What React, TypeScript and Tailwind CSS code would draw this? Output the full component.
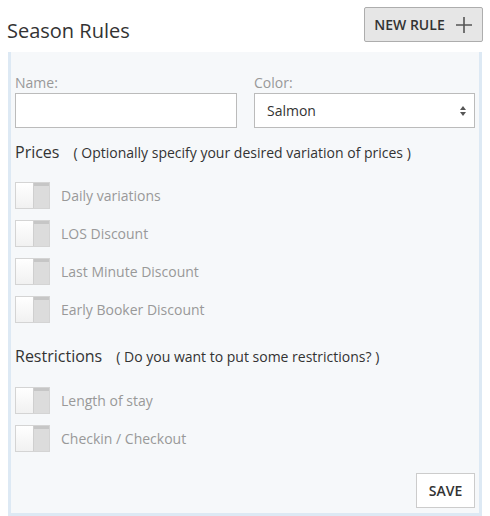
import React from "react";

function Toggle() {
  return (
    <div className="flex h-[27px] w-[35px] border border-[#d4d4d4] bg-white">
      <div className="h-full w-[18px] bg-gradient-to-b from-white to-[#f1f1f1] border-r border-[#cfcfcf]" />
      <div className="h-full flex-1 bg-[#dcdcdc] border-t-[3px] border-[#c6c6c6]" />
    </div>
  );
}

function Row({ label }: { label: string }) {
  return (
    <div className="flex items-center h-[27px]">
      <Toggle />
      <span className="ml-[11px] text-[14px] text-[#999]">{label}</span>
    </div>
  );
}

export default function App() {
  return (
    <div
      className="w-[490px] h-[516px] bg-white overflow-hidden flex flex-col"
      style={{ fontFamily: '"Open Sans", sans-serif' }}
    >
      <div className="flex justify-between items-start h-[52px]">
        <div className="pl-[7px] pt-[16px] text-[20px] leading-[30px] text-[#333]">Season Rules</div>
        <button className="mt-[7px] mr-[7px] h-[35px] w-[119px] flex items-center justify-center gap-[8px] rounded-[2px] border border-[#adadad] bg-[#e6e6e6] text-[14px] font-semibold text-[#333]">
          NEW RULE
          <svg width="18" height="18" viewBox="0 0 18 18" className="ml-[2px]">
            <path d="M9 1V17M1 9H17" stroke="#555" strokeWidth="1.6" fill="none" />
          </svg>
        </button>
      </div>
      <div className="mx-[8px] flex-1 border-l-[3px] border-r-[3px] border-b-[3px] border-[#dde9f4] bg-[#f6f8fa] pl-[4px] pr-[6px] pt-[21px]">
        <div className="grid grid-cols-[222px_221px] gap-x-[17px]">
          <div>
            <div className="text-[14px] leading-[20px] text-[#999]">Name:</div>
            <input className="block h-[35px] w-full border border-[#bbb] bg-white outline-none" />
          </div>
          <div>
            <div className="text-[14px] leading-[20px] text-[#999]">Color:</div>
            <div className="flex h-[35px] w-full items-center justify-between border border-[#bbb] bg-white pl-[12px] pr-[7px]">
              <span className="text-[14px] text-[#333]">Salmon</span>
              <svg width="8" height="12" viewBox="0 0 8 12">
                <path d="M4 1L7 5H1Z M4 11L7 7H1Z" fill="#555" />
              </svg>
            </div>
          </div>
        </div>
        <div className="mt-[12px] flex items-center h-[24px] text-[#333]">
          <span className="text-[16px]">Prices</span>
          <span className="ml-[14px] text-[14px]">( Optionally specify your desired variation of prices )</span>
        </div>
        <div className="mt-[18px] flex flex-col gap-[11px]">
          <Row label="Daily variations" />
          <Row label="LOS Discount" />
          <Row label="Last Minute Discount" />
          <Row label="Early Booker Discount" />
        </div>
        <div className="mt-[21px] flex items-center h-[24px] text-[#333]">
          <span className="text-[16px]">Restrictions</span>
          <span className="ml-[14px] text-[14px]">( Do you want to put some restrictions? )</span>
        </div>
        <div className="mt-[19px] flex flex-col gap-[11px]">
          <Row label="Length of stay" />
          <Row label="Checkin / Checkout" />
        </div>
        <div className="mt-[21px] flex justify-end">
          <button className="mr-[-2px] h-[35px] w-[59px] border border-[#ccc] bg-white text-[14px] font-semibold text-[#333]">
            SAVE
          </button>
        </div>
      </div>
    </div>
  );
}
